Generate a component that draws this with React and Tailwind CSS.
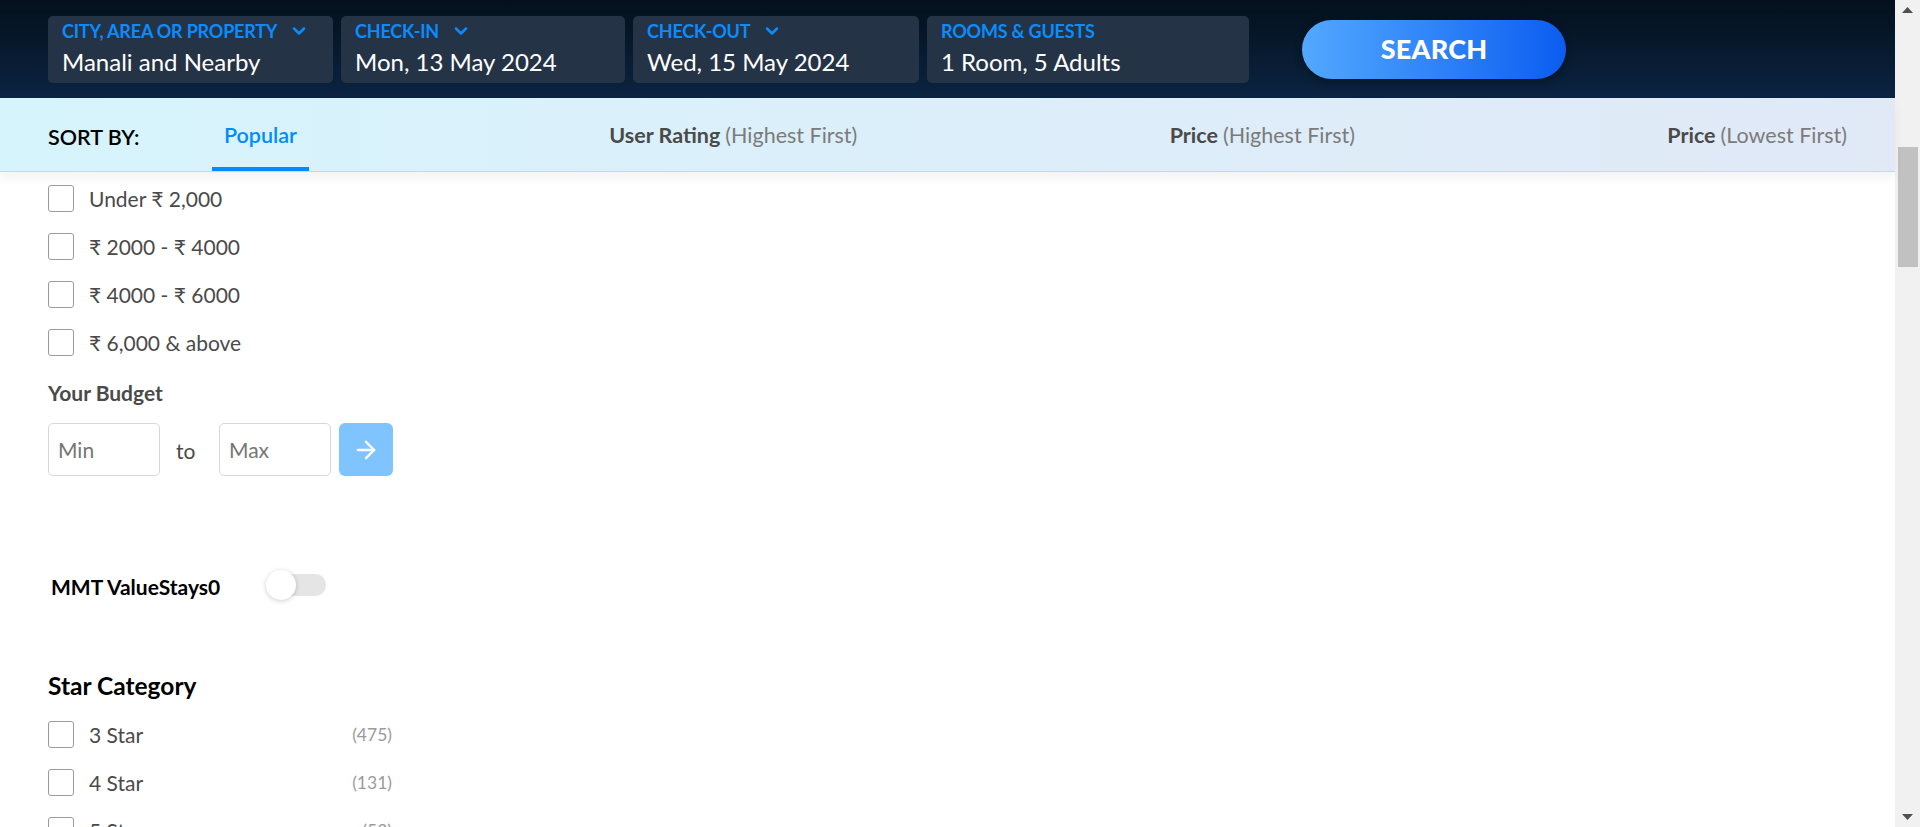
import React, { useState } from "react";
import { ChevronDown, ArrowRight } from "lucide-react";

const searchFields = [
  { label: "City, Area or Property", value: "Manali and Nearby", width: "w-[285px]", chevron: true },
  { label: "Check-In", value: "Mon, 13 May 2024", width: "w-[284px]", chevron: true },
  { label: "Check-Out", value: "Wed, 15 May 2024", width: "w-[286px]", chevron: true },
  { label: "Rooms & Guests", value: "1 Room, 5 Adults", width: "w-[322px]", chevron: false },
];

const sortOptions = [
  { bold: "Popular", light: "" },
  { bold: "User Rating", light: "(Highest First)" },
  { bold: "Price", light: "(Highest First)" },
  { bold: "Price", light: "(Lowest First)" },
];

const priceRanges = ["Under ₹ 2,000", "₹ 2000 - ₹ 4000", "₹ 4000 - ₹ 6000", "₹ 6,000 & above"];

const starCategories = [
  { label: "3 Star", count: 475 },
  { label: "4 Star", count: 131 },
  { label: "5 Star", count: 53 },
];

const Checkbox = () => (
  <span className="w-[26px] h-[27px] shrink-0 rounded-[3px] border border-[#9b9b9b] bg-white" />
);

const App = () => {
  const [activeSort, setActiveSort] = useState(0);
  const [valueStays, setValueStays] = useState(false);

  return (
    <div className="flex h-[827px] w-[1920px] overflow-hidden bg-white font-['Lato','Noto_Sans',sans-serif]">
      <div className="flex-1 min-w-0 flex flex-col">
        {/* search header */}
        <div className="h-[98px] shrink-0 flex items-center pl-12 bg-gradient-to-b from-[#04101c] to-[#0b2442]">
          <div className="flex items-center gap-2">
            {searchFields.map((f) => (
              <div
                key={f.label}
                className={`${f.width} h-[67px] rounded-[5px] bg-[#243446] px-[14px] pt-[2px] flex flex-col`}
              >
                <div className="flex items-center gap-[12px] whitespace-nowrap text-[#0a8cff] text-[18px] tracking-[-0.2px] font-bold uppercase leading-[26px]">
                  {f.label}
                  {f.chevron && <ChevronDown className="shrink-0" size={20} strokeWidth={3} />}
                </div>
                <div className="text-white text-[24px] leading-[30px] mt-[3px] whitespace-nowrap">{f.value}</div>
              </div>
            ))}
          </div>
          <button className="ml-[53px] w-[264px] h-[59px] rounded-full bg-gradient-to-r from-[#53a8ff] to-[#0b5cf0] text-white text-[27px] font-black tracking-[0.2px] shadow-[0_3px_8px_rgba(0,0,0,0.35)]">
            SEARCH
          </button>
        </div>

        {/* sort bar */}
        <div className="relative z-10 h-[74px] shrink-0 flex items-stretch pl-12 pr-[36px] bg-gradient-to-r from-[#d6f4fc] to-[#e1e9f7] border-b border-[#c6d8ea] shadow-[0_6px_10px_rgba(0,0,0,0.05)]">
          <div className="flex items-center w-[164px] pt-[6px] text-[21.5px] font-semibold text-black">SORT BY:</div>
          <div className="flex-1 flex justify-between">
            {sortOptions.map((o, i) => (
              <button
                key={i}
                onClick={() => setActiveSort(i)}
                className={`px-3 pt-[6px] flex items-center text-[21.5px] border-b-4 ${
                  activeSort === i ? "border-[#008cff]" : "border-transparent"
                }`}
              >
                <span className={activeSort === i ? "text-[#008cff] font-semibold" : "text-[#4a4a4a] font-bold"}>
                  {o.bold}
                </span>
                {o.light && <span className="ml-[5px] text-[#7b7b7b]">{o.light}</span>}
              </button>
            ))}
          </div>
        </div>

        {/* filters */}
        <div className="flex-1 pl-12 pt-[13px]">
          <div className="w-[344px] flex flex-col gap-[21px]">
            {priceRanges.map((p) => (
              <label key={p} className="flex items-center gap-[15px] text-[21px] text-[#4a4a4a] leading-[27px]">
                <Checkbox />
                {p}
              </label>
            ))}
          </div>

          <div className="mt-[25px] text-[21px] font-bold text-[#4a4a4a] leading-[24px]">Your Budget</div>
          <div className="mt-[18px] flex items-center">
            <div className="w-[112px] h-[53px] rounded-[5px] border border-[#d8d8d8] flex items-center px-[9px] text-[21px] text-[#757575]">
              Min
            </div>
            <span className="w-[59px] pl-[16px] text-[21px] text-[#4a4a4a] pt-[3px]">to</span>
            <div className="w-[112px] h-[53px] rounded-[5px] border border-[#d8d8d8] flex items-center px-[9px] text-[21px] text-[#757575]">
              Max
            </div>
            <button className="ml-2 w-[54px] h-[53px] rounded-[6px] bg-[#80c4ff] flex items-center justify-center text-white">
              <ArrowRight size={28} strokeWidth={2} />
            </button>
          </div>

          <div className="mt-[94px] flex items-center h-[30px] pl-[3px]">
            <span className="text-[21px] font-bold text-black pt-[3px]">MMT ValueStays0</span>
            <button
              onClick={() => setValueStays(!valueStays)}
              className="ml-[46px] relative w-[60px] h-[30px] flex items-center"
            >
              <span className="ml-[12px] w-[48px] h-[22px] rounded-full bg-[#e5e5e5]" />
              <span className="absolute left-0 top-0 w-[30px] h-[30px] rounded-full bg-white shadow-[0_1px_5px_rgba(0,0,0,0.2)]" />
            </button>
          </div>

          <div className="mt-[71px] text-[24.5px] font-bold text-black leading-[30px]">Star Category</div>
          <div className="mt-[20px] w-[344px] flex flex-col gap-[21px]">
            {starCategories.map((s) => (
              <label key={s.label} className="flex items-center gap-[15px] text-[21px] text-[#4a4a4a] leading-[27px]">
                <Checkbox />
                <span className="flex-1">{s.label}</span>
                <span className="text-[17.5px] text-[#9b9b9b]">({s.count})</span>
              </label>
            ))}
          </div>
        </div>
      </div>

      {/* scrollbar */}
      <div className="w-[25px] shrink-0 bg-[#f1f1f1] flex flex-col items-center">
        <div className="h-[20px] flex items-center justify-center">
          <svg width="11" height="6" viewBox="0 0 11 6"><path d="M0 6 L5.5 0 L11 6 Z" fill="#505050" /></svg>
        </div>
        <div className="mt-[127px] w-[20px] h-[120px] bg-[#c1c1c1]" />
        <div className="flex-1" />
        <div className="h-[20px] flex items-center justify-center">
          <svg width="11" height="6" viewBox="0 0 11 6"><path d="M0 0 L5.5 6 L11 0 Z" fill="#505050" /></svg>
        </div>
      </div>
    </div>
  );
};

export default App;
